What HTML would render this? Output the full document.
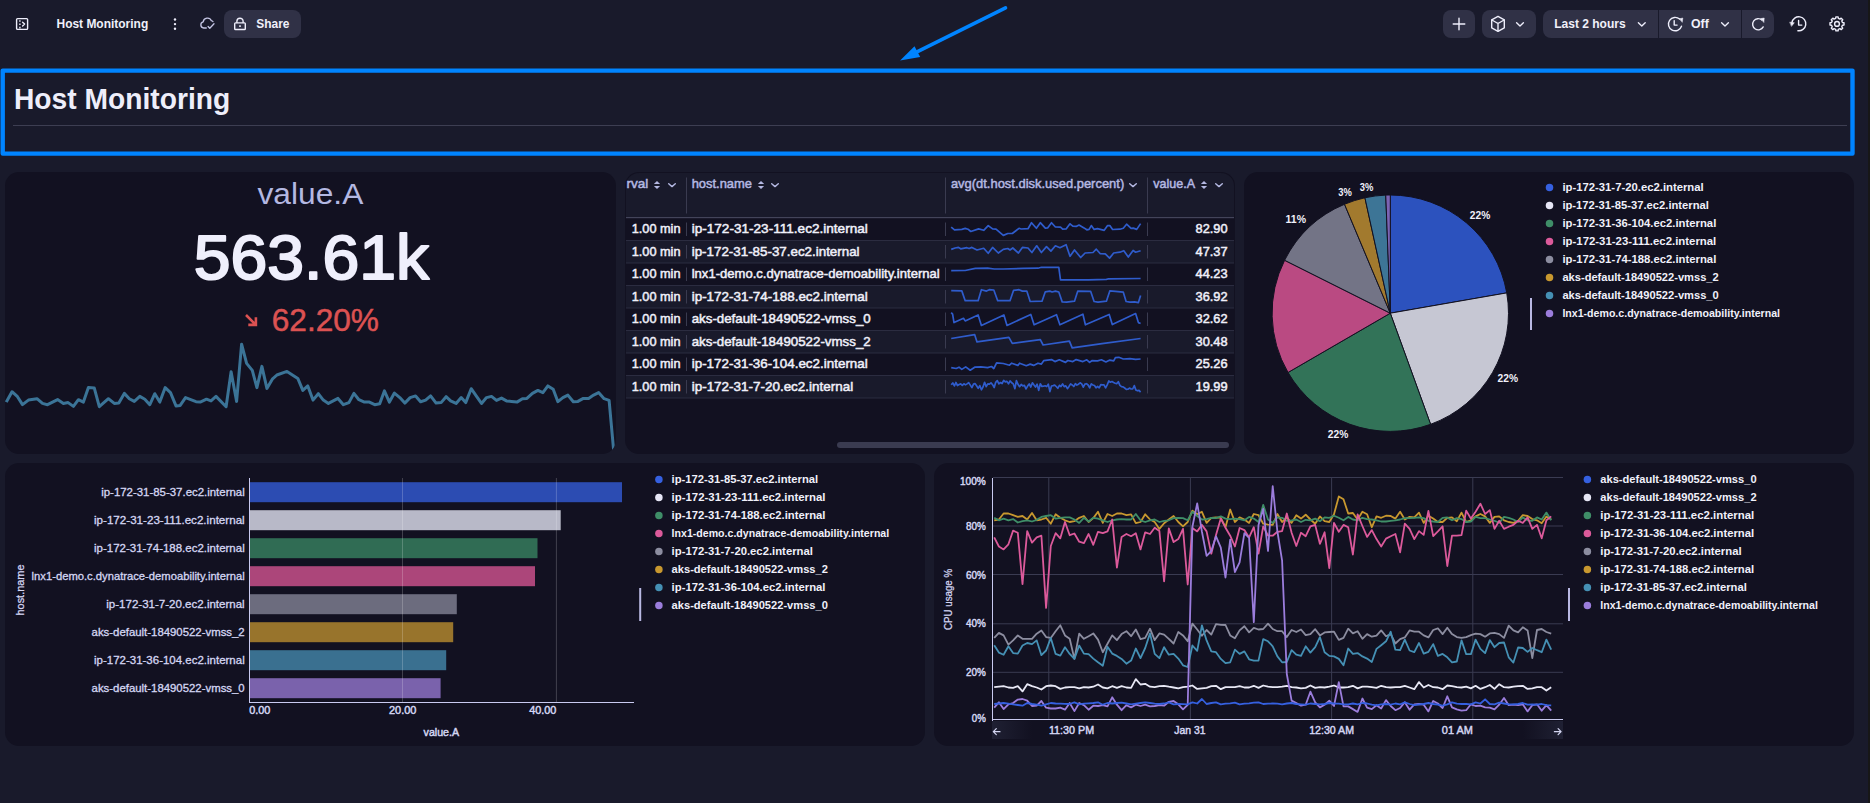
<!DOCTYPE html>
<html lang="en"><head><meta charset="utf-8"><title>Host Monitoring</title><style>
*{box-sizing:border-box}
html,body{margin:0;padding:0}
body{width:1870px;height:803px;overflow:hidden;position:relative;background:#191a2b;font-family:"Liberation Sans",sans-serif;color:#f0f0fa}
.topbar{position:absolute;left:0;top:0;width:1870px;height:48px}
.btn{position:absolute;top:10px;height:28px;background:#303146;border-radius:8px}
.ov{position:absolute;left:0;top:0;display:block}
.panel{position:absolute;background:#121121;border-radius:14px;overflow:hidden}
.panel svg{display:block}
.thead{position:absolute;left:1px;top:1px;width:608px;height:45px;background:#191a2b;border-radius:13px 13px 0 0}
.tr{position:absolute;left:1px;width:608px}
.r0{background:#121121}.r1{background:#191a2b}
.hscroll{position:absolute;left:212px;top:270px;width:392px;height:6px;border-radius:3px;background:#3a3b50}
.edge{position:absolute;right:0;top:0;width:2px;height:803px;background:#171717}
</style></head>
<body>
<div class="topbar">
<div class="btn" style="left:224px;width:77px"></div>
<div class="btn" style="left:1443px;width:32px"></div>
<div class="btn" style="left:1482px;width:54px"></div>
<div class="btn" style="left:1543px;width:115px;border-radius:8px 0 0 8px"></div>
<div class="btn" style="left:1659px;width:82px;border-radius:0"></div>
<div class="btn" style="left:1742px;width:32px;border-radius:0 8px 8px 0"></div>
</div>
<svg class="ov" width="1870" height="64" viewBox="0 0 1870 64" font-family='"Liberation Sans", sans-serif'>
<g fill="none" stroke="#eeeefb" stroke-width="1.4" stroke-linecap="round" stroke-linejoin="round"><rect x="16.6" y="18.6" width="11" height="10.8" rx="1"/><path d="M22.6 22.2l2 1.9-2 1.9"/><path d="M19.9 19v10" stroke-dasharray="1.6 1.7" stroke-dashoffset="-1.2" stroke-linecap="butt"/></g>
<text x="56.5" y="27.7" font-size="13" fill="#f0f0fa" font-weight="bold" textLength="91.7" lengthAdjust="spacingAndGlyphs">Host Monitoring</text>
<circle cx="175" cy="19.5" r="1.2" fill="#eeeefb"/>
<circle cx="175" cy="24.1" r="1.2" fill="#eeeefb"/>
<circle cx="175" cy="28.7" r="1.2" fill="#eeeefb"/>
<g fill="none" stroke="#c4c5e4" stroke-width="1.3" stroke-linecap="round" stroke-linejoin="round"><path d="M206.3 28h-2.6a3.1 3.1 0 0 1-.5-6.1 4.3 4.3 0 0 1 8.2-1.2 2.9 2.9 0 0 1 1.6.9"/><path d="M208.1 26.5l1.7 1.8 4.2-4.6"/></g>
<g fill="none" stroke="#eeeefb" stroke-width="1.4" stroke-linecap="round" stroke-linejoin="round"><rect x="234.7" y="22.9" width="10.6" height="6.6" rx="0.8"/><path d="M236.9 22.6v-1.3a3.1 3.1 0 0 1 6.2 0v1.3"/><path d="M240 25.3v1.8" stroke-width="1.6" stroke-linecap="butt"/></g>
<text x="256.3" y="27.8" font-size="13" fill="#f0f0fa" font-weight="bold" textLength="33.2" lengthAdjust="spacingAndGlyphs">Share</text>
<path d="M1453.2 24h11.6M1459 18.2v11.6" fill="none" stroke="#eeeefb" stroke-width="1.4" stroke-linecap="round" stroke-linejoin="round" stroke-width="1.6" stroke-linecap="butt"/>
<g fill="none" stroke="#eeeefb" stroke-width="1.4" stroke-linecap="round" stroke-linejoin="round"><path d="M1498 16.4l6.3 3.5v7.9l-6.3 3.5-6.3-3.5v-7.9z"/><path d="M1491.9 20l6.1 3.5 6.1-3.5M1498 23.5v7.6"/></g>
<path d="M1516.6 22.7l3.4 3.2 3.4-3.2" fill="none" stroke="#eeeefb" stroke-width="1.4" stroke-linecap="round" stroke-linejoin="round" stroke-width="1.5"/>
<text x="1554.2" y="28.1" font-size="13.2" fill="#f0f0fa" font-weight="bold" textLength="71.5" lengthAdjust="spacingAndGlyphs">Last 2 hours</text>
<path d="M1638.3999999999999 22.7l3.4 3.2 3.4-3.2" fill="none" stroke="#eeeefb" stroke-width="1.4" stroke-linecap="round" stroke-linejoin="round" stroke-width="1.5"/>
<g fill="none" stroke="#eeeefb" stroke-width="1.4" stroke-linecap="round" stroke-linejoin="round"><path d="M1679.6 19.1A6.7 6.7 0 1 0 1681.5 26.2"/><path d="M1679.5 18.8l3.3-.8-.5 4z" fill="#eeeefb" stroke-width="0.5"/><path d="M1674.2 20.6v4.5h2.9"/></g>
<text x="1691.0" y="28.1" font-size="13.2" fill="#f0f0fa" font-weight="bold" textLength="17.8" lengthAdjust="spacingAndGlyphs">Off</text>
<path d="M1721.6 22.7l3.4 3.2 3.4-3.2" fill="none" stroke="#eeeefb" stroke-width="1.4" stroke-linecap="round" stroke-linejoin="round" stroke-width="1.5"/>
<g fill="none" stroke="#eeeefb" stroke-width="1.4" stroke-linecap="round" stroke-linejoin="round"><path d="M1761.9 20A5.6 5.6 0 1 0 1763.2 26.9"/><path d="M1760.7 18.6l3.5-.6-.3 4.2z" fill="#eeeefb" stroke-width="0.5"/></g>
<g fill="none" stroke="#eeeefb" stroke-width="1.4" stroke-linecap="round" stroke-linejoin="round"><path d="M1791.9 22.6A7 7 0 1 1 1797.9 30.75"/><path d="M1790 22.2l4.3.5-2.6 3.4z" fill="#eeeefb" stroke-width="0.5"/><path d="M1798.6 20.5v4.6h3.2"/></g>
<g fill="none" stroke="#eeeefb" stroke-width="1.4" stroke-linecap="round" stroke-linejoin="round" stroke-width="1.3"><path d="M1844.01 22.79 L1844.01 25.01 L1842.45 25.21 L1841.77 26.83 L1842.74 28.07 L1841.17 29.64 L1839.93 28.67 L1838.31 29.35 L1838.11 30.91 L1835.89 30.91 L1835.69 29.35 L1834.07 28.67 L1832.83 29.64 L1831.26 28.07 L1832.23 26.83 L1831.55 25.21 L1829.99 25.01 L1829.99 22.79 L1831.55 22.59 L1832.23 20.97 L1831.26 19.73 L1832.83 18.16 L1834.07 19.13 L1835.69 18.45 L1835.89 16.89 L1838.11 16.89 L1838.31 18.45 L1839.93 19.13 L1841.17 18.16 L1842.74 19.73 L1841.77 20.97 L1842.45 22.59Z"/><circle cx="1837" cy="23.9" r="2.4"/></g>
<g><path d="M1005.5 7.8L916 52.4" stroke="#0084ff" stroke-width="3.6" stroke-linecap="round" fill="none"/><path d="M900.1 60.6L914.5 46.3 920.2 57.1z" fill="#0084ff"/></g>
</svg>
<svg class="ov" style="top:60px" width="1870" height="104" viewBox="0 60 1870 104" font-family='"Liberation Sans", sans-serif'><text x="14.0" y="108.9" font-size="28.6" fill="#eeeefa" font-weight="bold" textLength="216.2" lengthAdjust="spacingAndGlyphs">Host Monitoring</text><rect x="13" y="125" width="1834" height="1" fill="#3d3e52"/><rect x="2.7" y="70.6" width="1849.8" height="83" fill="none" stroke="#0084ff" stroke-width="4.4" stroke-linejoin="round"/></svg>
<div class="panel" style="left:5px;top:172px;width:611px;height:282px"><svg width="611" height="282" viewBox="5 172 611 282" font-family='"Liberation Sans", sans-serif'><text x="257.5" y="203.9" font-size="29.6" fill="#b4b8e2" textLength="105.8" lengthAdjust="spacingAndGlyphs">value.A</text><text x="193.8" y="278.8" font-size="62.8" fill="#efeffc" textLength="235.2" lengthAdjust="spacingAndGlyphs" stroke="#efeffc" stroke-width="2" stroke-linejoin="round">563.61k</text><path d="M246 315l9.6 9.6M248.3 324.9h7.6v-7.6" fill="none" stroke="#dc5252" stroke-width="2.6"/><text x="271.7" y="330.6" font-size="32" fill="#dc5252" textLength="107.3" lengthAdjust="spacingAndGlyphs" stroke="#dc5252" stroke-width="0.5">62.20%</text><polyline points="6.3,402.1 12.0,391.7 17.5,396.7 22.5,404.6 28.4,400.1 37.0,398.7 42.5,403.4 47.5,404.7 57.6,399.6 63.4,403.4 68.1,402.6 73.4,406.4 78.4,399.7 83.4,402.1 88.4,387.6 94.3,388.1 99.3,406.7 108.4,398.7 114.3,403.4 118.8,403.1 124.3,393.4 129.3,398.7 134.3,401.4 139.8,396.4 144.8,399.2 149.8,404.7 154.8,393.7 159.8,402.1 165.2,387.6 170.5,392.6 176.0,405.9 180.2,405.4 185.5,397.6 196.0,401.7 200.2,402.1 206.5,399.2 211.0,400.9 216.0,396.4 226.1,406.7 231.1,371.7 236.6,401.4 241.6,344.2 246.6,363.4 252.3,370.4 256.9,387.6 261.9,366.4 266.9,388.4 272.3,379.2 276.9,375.0 287.0,371.4 297.8,378.4 302.8,390.4 307.8,385.9 313.0,400.1 318.3,393.7 323.3,400.1 328.4,403.4 338.0,398.4 343.4,404.7 348.9,402.6 353.9,393.4 358.9,399.7 364.4,402.1 369.4,402.1 374.7,404.7 379.7,403.7 384.4,390.9 389.4,402.1 394.4,393.1 399.8,397.6 404.8,403.1 410.1,397.6 415.6,395.9 420.6,401.7 425.6,400.1 430.6,395.9 436.1,403.1 441.1,402.6 446.1,396.7 450.6,400.9 456.1,403.4 461.2,397.6 465.7,402.6 471.2,388.7 476.2,395.9 481.5,403.4 486.5,397.6 491.5,396.4 496.5,400.4 501.5,398.1 506.5,400.9 511.5,401.4 516.9,402.1 522.4,398.7 526.9,398.4 532.4,393.4 537.9,390.4 542.9,392.6 547.9,385.9 553.2,389.2 557.9,401.7 562.9,397.6 567.9,395.1 573.3,401.7 577.9,401.4 583.3,398.4 588.6,398.4 593.6,395.1 598.6,392.6 604.1,398.7 609.1,400.4 614.0,454.3" fill="none" stroke="#3b7497" stroke-width="3" stroke-linejoin="round" stroke-linecap="butt"/></svg></div>
<div class="panel" style="left:625px;top:172px;width:610px;height:282px"><div class="thead"></div><div class="tr r0" style="top:46px;height:22px"></div><div class="tr r1" style="top:68px;height:23px"></div><div class="tr r0" style="top:91px;height:23px"></div><div class="tr r1" style="top:114px;height:22px"></div><div class="tr r0" style="top:136px;height:22px"></div><div class="tr r1" style="top:158px;height:23px"></div><div class="tr r0" style="top:181px;height:23px"></div><div class="tr r1" style="top:204px;height:22px"></div><div class="hscroll"></div><svg width="610" height="282" viewBox="625 172 610 282" font-family='"Liberation Sans", sans-serif' style="position:absolute;left:0;top:0"><text x="626.5" y="188.3" font-size="13.6" fill="#b4b8e2" textLength="21.8" lengthAdjust="spacingAndGlyphs" stroke="#b4b8e2" stroke-width="0.5">rval</text><path d="M653.9 183.9l3.1-3 3.1 3z M653.9 185.9l3.1 3 3.1-3z" fill="#b4b8e2"/><path d="M668.7 183.7l3.3 2.9 3.3-2.9" fill="none" stroke="#b4b8e2" stroke-width="1.4" stroke-linecap="round" stroke-linejoin="round"/><text x="691.7" y="188.3" font-size="13.6" fill="#b4b8e2" textLength="60.3" lengthAdjust="spacingAndGlyphs" stroke="#b4b8e2" stroke-width="0.5">host.name</text><path d="M757.9 183.9l3.1-3 3.1 3z M757.9 185.9l3.1 3 3.1-3z" fill="#b4b8e2"/><path d="M771.7 183.7l3.3 2.9 3.3-2.9" fill="none" stroke="#b4b8e2" stroke-width="1.4" stroke-linecap="round" stroke-linejoin="round"/><text x="950.9" y="188.3" font-size="13.6" fill="#b4b8e2" textLength="173.3" lengthAdjust="spacingAndGlyphs" stroke="#b4b8e2" stroke-width="0.5">avg(dt.host.disk.used.percent)</text><path d="M1129.7 183.7l3.3 2.9 3.3-2.9" fill="none" stroke="#b4b8e2" stroke-width="1.4" stroke-linecap="round" stroke-linejoin="round"/><text x="1153.2" y="188.3" font-size="13.6" fill="#b4b8e2" textLength="41.8" lengthAdjust="spacingAndGlyphs" stroke="#b4b8e2" stroke-width="0.5">value.A</text><path d="M1200.9 183.9l3.1-3 3.1 3z M1200.9 185.9l3.1 3 3.1-3z" fill="#b4b8e2"/><path d="M1215.7 183.7l3.3 2.9 3.3-2.9" fill="none" stroke="#b4b8e2" stroke-width="1.4" stroke-linecap="round" stroke-linejoin="round"/><rect x="686.0" y="177.5" width="1" height="36" fill="#3a3b50"/><rect x="945.0" y="177.5" width="1" height="36" fill="#3a3b50"/><rect x="1147.0" y="177.5" width="1" height="36" fill="#3a3b50"/><rect x="626" y="217" width="608" height="1.2" fill="#43445a"/><rect x="626" y="240.0" width="608" height="1" fill="#2b2c40"/><rect x="686.0" y="222.5" width="1" height="13.5" fill="#3a3b50"/><rect x="945.0" y="222.5" width="1" height="13.5" fill="#3a3b50"/><rect x="1147.0" y="222.5" width="1" height="13.5" fill="#3a3b50"/><text x="631.7" y="233.1" font-size="13.4" fill="#f0f0fa" textLength="48.8" lengthAdjust="spacingAndGlyphs" stroke="#f0f0fa" stroke-width="0.5">1.00 min</text><text x="691.7" y="233.1" font-size="13.4" fill="#f0f0fa" textLength="176.1" lengthAdjust="spacingAndGlyphs" stroke="#f0f0fa" stroke-width="0.5">ip-172-31-23-111.ec2.internal</text><text x="1227.6" y="233.1" font-size="13.4" fill="#f0f0fa" text-anchor="end" textLength="32.0" lengthAdjust="spacingAndGlyphs" stroke="#f0f0fa" stroke-width="0.5">82.90</text><polyline points="951.2,227.2 954.5,229.8 961.8,229.4 965.2,228.4 968.0,229.2 970.8,231.5 978.6,228.9 983.7,230.3 988.2,225.6 992.6,228.9 996.0,229.2 1003.3,235.4 1007.8,233.5 1012.3,233.5 1019.0,228.3 1021.2,229.0 1028.0,228.7 1031.5,222.7 1036.4,228.3 1040.3,222.7 1045.3,228.1 1047.6,227.9 1051.5,222.7 1055.4,227.0 1060.5,227.2 1062.7,229.2 1066.1,229.0 1070.0,223.8 1072.8,226.1 1076.2,226.4 1079.0,225.0 1084.0,227.9 1086.8,229.8 1089.1,229.4 1091.3,225.6 1094.1,229.4 1097.5,228.7 1104.2,230.3 1107.6,225.6 1109.8,225.6 1112.6,229.5 1119.9,229.2 1123.3,228.3 1126.6,224.2 1131.1,228.3 1133.3,228.1 1136.7,229.4 1140.6,223.6" fill="none" stroke="#2f5ccc" stroke-width="1.7" stroke-linejoin="round"/><rect x="626" y="262.5" width="608" height="1" fill="#2b2c40"/><rect x="686.0" y="245.0" width="1" height="13.5" fill="#3a3b50"/><rect x="945.0" y="245.0" width="1" height="13.5" fill="#3a3b50"/><rect x="1147.0" y="245.0" width="1" height="13.5" fill="#3a3b50"/><text x="631.7" y="255.6" font-size="13.4" fill="#f0f0fa" textLength="48.8" lengthAdjust="spacingAndGlyphs" stroke="#f0f0fa" stroke-width="0.5">1.00 min</text><text x="691.7" y="255.6" font-size="13.4" fill="#f0f0fa" textLength="167.9" lengthAdjust="spacingAndGlyphs" stroke="#f0f0fa" stroke-width="0.5">ip-172-31-85-37.ec2.internal</text><text x="1227.6" y="255.6" font-size="13.4" fill="#f0f0fa" text-anchor="end" textLength="32.0" lengthAdjust="spacingAndGlyphs" stroke="#f0f0fa" stroke-width="0.5">47.37</text><polyline points="951.2,249.4 955.1,248.0 958.5,247.4 960.7,248.8 966.9,247.7 969.1,248.5 971.9,247.4 977.0,250.0 983.7,248.3 988.2,253.3 992.6,247.4 998.3,253.0 1003.3,249.4 1007.8,248.5 1010.0,250.0 1012.8,248.0 1018.4,253.0 1022.4,247.4 1028.0,248.0 1031.9,252.5 1036.7,245.8 1041.4,252.5 1046.5,246.6 1050.9,251.1 1055.4,245.8 1059.9,247.7 1066.1,244.7 1070.0,256.3 1074.5,250.0 1080.7,257.5 1085.1,253.0 1093.0,252.5 1096.3,249.2 1100.3,253.7 1105.3,253.9 1109.6,258.1 1113.7,253.0 1119.9,252.2 1123.8,250.7 1128.3,257.0 1133.1,250.5 1135.6,252.2 1140.6,250.7" fill="none" stroke="#2f5ccc" stroke-width="1.7" stroke-linejoin="round"/><rect x="626" y="285.0" width="608" height="1" fill="#2b2c40"/><rect x="686.0" y="267.5" width="1" height="13.5" fill="#3a3b50"/><rect x="945.0" y="267.5" width="1" height="13.5" fill="#3a3b50"/><rect x="1147.0" y="267.5" width="1" height="13.5" fill="#3a3b50"/><text x="631.7" y="278.1" font-size="13.4" fill="#f0f0fa" textLength="48.8" lengthAdjust="spacingAndGlyphs" stroke="#f0f0fa" stroke-width="0.5">1.00 min</text><text x="691.7" y="278.1" font-size="13.4" fill="#f0f0fa" textLength="248.0" lengthAdjust="spacingAndGlyphs" stroke="#f0f0fa" stroke-width="0.5">lnx1-demo.c.dynatrace-demoability.internal</text><text x="1227.6" y="278.1" font-size="13.4" fill="#f0f0fa" text-anchor="end" textLength="32.0" lengthAdjust="spacingAndGlyphs" stroke="#f0f0fa" stroke-width="0.5">44.23</text><polyline points="951.2,270.7 965.2,270.5 975.3,268.4 987.6,268.2 994.3,269.0 1003.3,269.0 1023.5,268.4 1038.0,268.2 1041.4,267.3 1058.8,267.3 1060.5,279.9 1088.5,279.9 1106.4,279.4 1108.7,278.8 1140.6,278.5" fill="none" stroke="#2f5ccc" stroke-width="1.7" stroke-linejoin="round"/><rect x="626" y="307.5" width="608" height="1" fill="#2b2c40"/><rect x="686.0" y="290.0" width="1" height="13.5" fill="#3a3b50"/><rect x="945.0" y="290.0" width="1" height="13.5" fill="#3a3b50"/><rect x="1147.0" y="290.0" width="1" height="13.5" fill="#3a3b50"/><text x="631.7" y="300.6" font-size="13.4" fill="#f0f0fa" textLength="48.8" lengthAdjust="spacingAndGlyphs" stroke="#f0f0fa" stroke-width="0.5">1.00 min</text><text x="691.7" y="300.6" font-size="13.4" fill="#f0f0fa" textLength="176.1" lengthAdjust="spacingAndGlyphs" stroke="#f0f0fa" stroke-width="0.5">ip-172-31-74-188.ec2.internal</text><text x="1227.6" y="300.6" font-size="13.4" fill="#f0f0fa" text-anchor="end" textLength="32.0" lengthAdjust="spacingAndGlyphs" stroke="#f0f0fa" stroke-width="0.5">36.92</text><polyline points="951.2,290.6 961.8,290.9 965.2,300.7 978.1,300.7 981.4,289.7 986.5,291.1 989.3,289.7 993.8,290.0 997.7,300.7 1010.0,300.7 1013.6,290.3 1019.0,289.7 1022.4,291.1 1026.8,291.1 1030.2,301.5 1042.0,301.2 1045.3,291.8 1049.8,291.1 1052.1,292.0 1055.4,291.1 1058.8,292.0 1062.2,301.9 1066.6,302.1 1074.5,301.2 1077.8,291.1 1090.7,291.4 1094.1,301.5 1098.0,302.1 1106.4,301.2 1109.8,290.9 1115.4,291.4 1123.3,292.2 1126.1,301.5 1130.0,302.1 1134.5,301.9 1138.4,302.6 1140.6,295.6" fill="none" stroke="#2f5ccc" stroke-width="1.7" stroke-linejoin="round"/><rect x="626" y="330.0" width="608" height="1" fill="#2b2c40"/><rect x="686.0" y="312.5" width="1" height="13.5" fill="#3a3b50"/><rect x="945.0" y="312.5" width="1" height="13.5" fill="#3a3b50"/><rect x="1147.0" y="312.5" width="1" height="13.5" fill="#3a3b50"/><text x="631.7" y="323.1" font-size="13.4" fill="#f0f0fa" textLength="48.8" lengthAdjust="spacingAndGlyphs" stroke="#f0f0fa" stroke-width="0.5">1.00 min</text><text x="691.7" y="323.1" font-size="13.4" fill="#f0f0fa" textLength="179.0" lengthAdjust="spacingAndGlyphs" stroke="#f0f0fa" stroke-width="0.5">aks-default-18490522-vmss_0</text><text x="1227.6" y="323.1" font-size="13.4" fill="#f0f0fa" text-anchor="end" textLength="32.0" lengthAdjust="spacingAndGlyphs" stroke="#f0f0fa" stroke-width="0.5">32.62</text><polyline points="951.2,312.7 952.6,314.2 954.0,322.6 963.5,318.3 965.2,320.9 978.1,315.0 981.4,325.4 1003.9,315.0 1007.0,325.4 1030.8,314.5 1034.1,324.8 1056.5,314.7 1059.9,324.8 1082.9,314.2 1085.4,324.8 1109.2,314.5 1112.3,324.6 1135.6,313.6 1138.4,322.6 1140.6,323.5" fill="none" stroke="#2f5ccc" stroke-width="1.7" stroke-linejoin="round"/><rect x="626" y="352.5" width="608" height="1" fill="#2b2c40"/><rect x="686.0" y="335.0" width="1" height="13.5" fill="#3a3b50"/><rect x="945.0" y="335.0" width="1" height="13.5" fill="#3a3b50"/><rect x="1147.0" y="335.0" width="1" height="13.5" fill="#3a3b50"/><text x="631.7" y="345.6" font-size="13.4" fill="#f0f0fa" textLength="48.8" lengthAdjust="spacingAndGlyphs" stroke="#f0f0fa" stroke-width="0.5">1.00 min</text><text x="691.7" y="345.6" font-size="13.4" fill="#f0f0fa" textLength="179.0" lengthAdjust="spacingAndGlyphs" stroke="#f0f0fa" stroke-width="0.5">aks-default-18490522-vmss_2</text><text x="1227.6" y="345.6" font-size="13.4" fill="#f0f0fa" text-anchor="end" textLength="32.0" lengthAdjust="spacingAndGlyphs" stroke="#f0f0fa" stroke-width="0.5">30.48</text><polyline points="951.2,338.5 974.7,334.7 977.0,341.9 1008.9,337.4 1012.3,343.3 1040.3,339.6 1043.1,345.0 1069.4,341.1 1072.2,347.8 1102.0,343.7 1140.6,338.5" fill="none" stroke="#2f5ccc" stroke-width="1.7" stroke-linejoin="round"/><rect x="626" y="375.0" width="608" height="1" fill="#2b2c40"/><rect x="686.0" y="357.5" width="1" height="13.5" fill="#3a3b50"/><rect x="945.0" y="357.5" width="1" height="13.5" fill="#3a3b50"/><rect x="1147.0" y="357.5" width="1" height="13.5" fill="#3a3b50"/><text x="631.7" y="368.1" font-size="13.4" fill="#f0f0fa" textLength="48.8" lengthAdjust="spacingAndGlyphs" stroke="#f0f0fa" stroke-width="0.5">1.00 min</text><text x="691.7" y="368.1" font-size="13.4" fill="#f0f0fa" textLength="176.1" lengthAdjust="spacingAndGlyphs" stroke="#f0f0fa" stroke-width="0.5">ip-172-31-36-104.ec2.internal</text><text x="1227.6" y="368.1" font-size="13.4" fill="#f0f0fa" text-anchor="end" textLength="32.0" lengthAdjust="spacingAndGlyphs" stroke="#f0f0fa" stroke-width="0.5">25.26</text><polyline points="951.2,367.6 956.2,368.5 959.0,367.2 961.8,369.4 965.7,366.9 970.2,370.2 974.7,367.2 980.9,366.9 987.6,367.6 991.5,366.5 993.8,368.5 996.6,362.9 1003.3,363.5 1009.5,365.2 1011.7,363.2 1017.9,365.4 1019.6,363.2 1026.3,365.7 1030.2,364.1 1033.6,365.4 1038.0,363.2 1041.4,364.1 1043.7,360.7 1051.5,359.6 1054.9,361.6 1059.3,359.8 1065.5,362.4 1067.8,360.5 1072.8,361.6 1076.2,359.6 1082.9,361.6 1086.8,359.8 1089.6,362.4 1091.9,360.7 1097.5,360.9 1101.4,359.8 1105.9,362.0 1109.8,360.1 1113.7,360.9 1115.4,357.6 1118.8,357.3 1123.3,359.0 1130.0,358.7 1135.6,359.3 1140.6,359.0" fill="none" stroke="#2f5ccc" stroke-width="1.7" stroke-linejoin="round"/><rect x="626" y="397.5" width="608" height="1" fill="#2b2c40"/><rect x="686.0" y="380.0" width="1" height="13.5" fill="#3a3b50"/><rect x="945.0" y="380.0" width="1" height="13.5" fill="#3a3b50"/><rect x="1147.0" y="380.0" width="1" height="13.5" fill="#3a3b50"/><text x="631.7" y="390.6" font-size="13.4" fill="#f0f0fa" textLength="48.8" lengthAdjust="spacingAndGlyphs" stroke="#f0f0fa" stroke-width="0.5">1.00 min</text><text x="691.7" y="390.6" font-size="13.4" fill="#f0f0fa" textLength="161.5" lengthAdjust="spacingAndGlyphs" stroke="#f0f0fa" stroke-width="0.5">ip-172-31-7-20.ec2.internal</text><text x="1227.6" y="390.6" font-size="13.4" fill="#f0f0fa" text-anchor="end" textLength="32.0" lengthAdjust="spacingAndGlyphs" stroke="#f0f0fa" stroke-width="0.5">19.99</text><polyline points="951.2,384.8 952.8,383.0 954.4,385.9 955.9,382.5 957.5,385.5 959.1,384.5 960.7,383.9 962.3,385.4 963.9,383.8 965.5,384.9 967.1,383.9 968.7,382.6 970.3,385.1 971.9,387.6 973.5,384.1 975.0,383.5 976.6,385.8 978.2,388.4 979.8,385.6 981.4,389.8 983.0,387.0 984.6,382.3 986.2,386.6 987.8,383.9 989.4,384.2 991.0,382.8 992.6,384.7 994.2,387.5 995.7,382.3 997.3,380.6 998.9,383.8 1000.5,382.5 1002.1,383.5 1003.7,380.4 1005.3,381.9 1006.9,381.4 1008.5,383.9 1010.1,380.9 1011.7,382.7 1013.3,383.9 1014.9,388.7 1016.4,380.6 1018.0,384.3 1019.6,386.7 1021.2,384.5 1022.8,385.9 1024.4,385.4 1026.0,388.9 1027.6,386.1 1029.2,383.9 1030.8,387.0 1032.4,382.8 1034.0,385.1 1035.5,387.1 1037.1,384.2 1038.7,390.4 1040.3,383.8 1041.9,386.5 1043.5,386.2 1045.1,385.8 1046.7,386.6 1048.3,384.1 1049.9,391.6 1051.5,386.0 1053.1,385.6 1054.7,385.1 1056.2,386.5 1057.8,388.3 1059.4,385.3 1061.0,386.5 1062.6,383.9 1064.2,386.7 1065.8,385.8 1067.4,388.7 1069.0,386.4 1070.6,383.9 1072.2,385.0 1073.8,386.5 1075.4,383.7 1076.9,385.1 1078.5,384.2 1080.1,382.8 1081.7,383.9 1083.3,387.2 1084.9,384.1 1086.5,383.7 1088.1,385.0 1089.7,387.9 1091.3,383.9 1092.9,385.0 1094.5,385.5 1096.0,387.9 1097.6,386.4 1099.2,387.8 1100.8,384.6 1102.4,384.8 1104.0,384.9 1105.6,387.9 1107.2,384.9 1108.8,381.0 1110.4,382.2 1112.0,381.5 1113.6,382.4 1115.2,383.2 1116.7,383.6 1118.3,381.7 1119.9,385.4 1121.5,386.7 1123.1,386.9 1124.7,388.0 1126.3,389.3 1127.9,389.2 1129.5,388.1 1131.1,389.0 1132.7,389.0 1134.3,385.6 1135.9,390.1 1137.4,390.8 1139.0,390.4 1140.6,392.1" fill="none" stroke="#2f5ccc" stroke-width="1.7" stroke-linejoin="round"/></svg></div>
<div class="panel" style="left:1244px;top:172px;width:610px;height:282px"><svg width="610" height="282" viewBox="1244 172 610 282" font-family='"Liberation Sans", sans-serif'><path d="M1390.3 313.2L1390.30 195.00A118.2 118.2 0 0 1 1506.74 292.88Z" fill="#2c52be" stroke="#121121" stroke-width="1" stroke-linejoin="round"/><path d="M1390.3 313.2L1506.74 292.88A118.2 118.2 0 0 1 1430.61 424.31Z" fill="#c6c7d3" stroke="#121121" stroke-width="1" stroke-linejoin="round"/><path d="M1390.3 313.2L1430.61 424.31A118.2 118.2 0 0 1 1288.04 372.48Z" fill="#327358" stroke="#121121" stroke-width="1" stroke-linejoin="round"/><path d="M1390.3 313.2L1288.04 372.48A118.2 118.2 0 0 1 1284.61 260.27Z" fill="#ba4a82" stroke="#121121" stroke-width="1" stroke-linejoin="round"/><path d="M1390.3 313.2L1284.61 260.27A118.2 118.2 0 0 1 1344.50 204.24Z" fill="#737486" stroke="#121121" stroke-width="1" stroke-linejoin="round"/><path d="M1390.3 313.2L1344.50 204.24A118.2 118.2 0 0 1 1364.92 197.76Z" fill="#a27a2e" stroke="#121121" stroke-width="1" stroke-linejoin="round"/><path d="M1390.3 313.2L1364.92 197.76A118.2 118.2 0 0 1 1385.76 195.09Z" fill="#3d7596" stroke="#121121" stroke-width="1" stroke-linejoin="round"/><path d="M1390.3 313.2L1385.76 195.09A118.2 118.2 0 0 1 1390.30 195.00Z" fill="#7c64b4" stroke="#121121" stroke-width="1" stroke-linejoin="round"/><text x="1469.8" y="219.4" font-size="10.8" fill="#f0f0fa" font-weight="bold" textLength="20.5" lengthAdjust="spacingAndGlyphs" stroke="#121121" stroke-width="2" paint-order="stroke" stroke-linejoin="round">22%</text><text x="1497.5" y="382.2" font-size="10.8" fill="#f0f0fa" font-weight="bold" textLength="20.5" lengthAdjust="spacingAndGlyphs" stroke="#121121" stroke-width="2" paint-order="stroke" stroke-linejoin="round">22%</text><text x="1327.8" y="438.0" font-size="10.8" fill="#f0f0fa" font-weight="bold" textLength="20.5" lengthAdjust="spacingAndGlyphs" stroke="#121121" stroke-width="2" paint-order="stroke" stroke-linejoin="round">22%</text><text x="1285.5" y="222.8" font-size="10.8" fill="#f0f0fa" font-weight="bold" textLength="20.5" lengthAdjust="spacingAndGlyphs" stroke="#121121" stroke-width="2" paint-order="stroke" stroke-linejoin="round">11%</text><text x="1338.2" y="196.0" font-size="10.8" fill="#f0f0fa" font-weight="bold" textLength="13.6" lengthAdjust="spacingAndGlyphs" stroke="#121121" stroke-width="2" paint-order="stroke" stroke-linejoin="round">3%</text><text x="1359.8" y="190.8" font-size="10.8" fill="#f0f0fa" font-weight="bold" textLength="13.6" lengthAdjust="spacingAndGlyphs" stroke="#121121" stroke-width="2" paint-order="stroke" stroke-linejoin="round">3%</text><circle cx="1549.5" cy="187.4" r="3.75" fill="#3560e0"/><text x="1562.4" y="191.0" font-size="10.8" fill="#f0f0fa" font-weight="bold" textLength="141.3" lengthAdjust="spacingAndGlyphs">ip-172-31-7-20.ec2.internal</text><circle cx="1549.5" cy="205.4" r="3.75" fill="#e6e6f5"/><text x="1562.4" y="209.0" font-size="10.8" fill="#f0f0fa" font-weight="bold" textLength="146.5" lengthAdjust="spacingAndGlyphs">ip-172-31-85-37.ec2.internal</text><circle cx="1549.5" cy="223.4" r="3.75" fill="#3f8e68"/><text x="1562.4" y="227.0" font-size="10.8" fill="#f0f0fa" font-weight="bold" textLength="153.9" lengthAdjust="spacingAndGlyphs">ip-172-31-36-104.ec2.internal</text><circle cx="1549.5" cy="241.4" r="3.75" fill="#dc5a9b"/><text x="1562.4" y="245.0" font-size="10.8" fill="#f0f0fa" font-weight="bold" textLength="153.9" lengthAdjust="spacingAndGlyphs">ip-172-31-23-111.ec2.internal</text><circle cx="1549.5" cy="259.4" r="3.75" fill="#8c8da0"/><text x="1562.4" y="263.0" font-size="10.8" fill="#f0f0fa" font-weight="bold" textLength="153.9" lengthAdjust="spacingAndGlyphs">ip-172-31-74-188.ec2.internal</text><circle cx="1549.5" cy="277.4" r="3.75" fill="#c8982f"/><text x="1562.4" y="281.0" font-size="10.8" fill="#f0f0fa" font-weight="bold" textLength="156.3" lengthAdjust="spacingAndGlyphs">aks-default-18490522-vmss_2</text><circle cx="1549.5" cy="295.4" r="3.75" fill="#4590b4"/><text x="1562.4" y="299.0" font-size="10.8" fill="#f0f0fa" font-weight="bold" textLength="156.3" lengthAdjust="spacingAndGlyphs">aks-default-18490522-vmss_0</text><circle cx="1549.5" cy="313.4" r="3.75" fill="#9b7ddc"/><text x="1562.4" y="317.0" font-size="10.8" fill="#f0f0fa" font-weight="bold" textLength="217.6" lengthAdjust="spacingAndGlyphs">lnx1-demo.c.dynatrace-demoability.internal</text><rect x="1530" y="298" width="2" height="32" fill="#b9b9e3"/></svg></div>
<div class="panel" style="left:5px;top:463px;width:920px;height:283px"><svg width="920" height="283" viewBox="5 463 920 283" font-family='"Liberation Sans", sans-serif'><rect x="250" y="482.2" width="372.0" height="20" fill="#2c4cb2"/><text x="101.2" y="495.9" font-size="10.8" fill="#d4d6f2" textLength="143.5" lengthAdjust="spacingAndGlyphs" stroke="#d4d6f2" stroke-width="0.3">ip-172-31-85-37.ec2.internal</text><rect x="250" y="510.2" width="310.7" height="20" fill="#b8b9c8"/><text x="94.0" y="523.9" font-size="10.8" fill="#d4d6f2" textLength="150.7" lengthAdjust="spacingAndGlyphs" stroke="#d4d6f2" stroke-width="0.3">ip-172-31-23-111.ec2.internal</text><rect x="250" y="538.2" width="287.5" height="20" fill="#306c54"/><text x="94.0" y="551.9" font-size="10.8" fill="#d4d6f2" textLength="150.7" lengthAdjust="spacingAndGlyphs" stroke="#d4d6f2" stroke-width="0.3">ip-172-31-74-188.ec2.internal</text><rect x="250" y="566.2" width="285.0" height="20" fill="#ac467a"/><text x="31.6" y="579.9" font-size="10.8" fill="#d4d6f2" textLength="213.1" lengthAdjust="spacingAndGlyphs" stroke="#d4d6f2" stroke-width="0.3">lnx1-demo.c.dynatrace-demoability.internal</text><rect x="250" y="594.2" width="206.8" height="20" fill="#6c6c7e"/><text x="106.3" y="607.9" font-size="10.8" fill="#d4d6f2" textLength="138.4" lengthAdjust="spacingAndGlyphs" stroke="#d4d6f2" stroke-width="0.3">ip-172-31-7-20.ec2.internal</text><rect x="250" y="622.2" width="203.2" height="20" fill="#98742c"/><text x="91.6" y="635.9" font-size="10.8" fill="#d4d6f2" textLength="153.1" lengthAdjust="spacingAndGlyphs" stroke="#d4d6f2" stroke-width="0.3">aks-default-18490522-vmss_2</text><rect x="250" y="650.2" width="196.2" height="20" fill="#3a7090"/><text x="94.0" y="663.9" font-size="10.8" fill="#d4d6f2" textLength="150.7" lengthAdjust="spacingAndGlyphs" stroke="#d4d6f2" stroke-width="0.3">ip-172-31-36-104.ec2.internal</text><rect x="250" y="678.2" width="190.6" height="20" fill="#7a62ac"/><text x="91.6" y="691.9" font-size="10.8" fill="#d4d6f2" textLength="153.1" lengthAdjust="spacingAndGlyphs" stroke="#d4d6f2" stroke-width="0.3">aks-default-18490522-vmss_0</text><rect x="402.0" y="478" width="1" height="224" fill="#ffffff" fill-opacity="0.2"/><rect x="555.9" y="478" width="1" height="224" fill="#ffffff" fill-opacity="0.2"/><rect x="249" y="478" width="1" height="225" fill="#c9caf0"/><rect x="249" y="702" width="385" height="1" fill="#c9caf0"/><text x="249.2" y="714.1" font-size="10.6" fill="#d4d6f2" textLength="21.2" lengthAdjust="spacingAndGlyphs" stroke="#d4d6f2" stroke-width="0.45">0.00</text><text x="389.0" y="714.1" font-size="10.6" fill="#d4d6f2" textLength="27.4" lengthAdjust="spacingAndGlyphs" stroke="#d4d6f2" stroke-width="0.45">20.00</text><text x="529.2" y="714.1" font-size="10.6" fill="#d4d6f2" textLength="27.2" lengthAdjust="spacingAndGlyphs" stroke="#d4d6f2" stroke-width="0.45">40.00</text><text x="423.6" y="735.9" font-size="10.6" fill="#d4d6f2" textLength="35.5" lengthAdjust="spacingAndGlyphs" stroke="#d4d6f2" stroke-width="0.45">value.A</text><g transform="translate(24.2 590) rotate(-90)"><text x="-25.5" y="0.0" font-size="10.6" fill="#d4d6f2" textLength="51.0" lengthAdjust="spacingAndGlyphs" stroke="#d4d6f2" stroke-width="0.25">host.name</text></g><circle cx="658.9" cy="479.4" r="3.75" fill="#3560e0"/><text x="671.6" y="483.0" font-size="10.8" fill="#f0f0fa" font-weight="bold" textLength="146.5" lengthAdjust="spacingAndGlyphs">ip-172-31-85-37.ec2.internal</text><circle cx="658.9" cy="497.4" r="3.75" fill="#e6e6f5"/><text x="671.6" y="501.0" font-size="10.8" fill="#f0f0fa" font-weight="bold" textLength="153.9" lengthAdjust="spacingAndGlyphs">ip-172-31-23-111.ec2.internal</text><circle cx="658.9" cy="515.4" r="3.75" fill="#3f8e68"/><text x="671.6" y="519.0" font-size="10.8" fill="#f0f0fa" font-weight="bold" textLength="153.9" lengthAdjust="spacingAndGlyphs">ip-172-31-74-188.ec2.internal</text><circle cx="658.9" cy="533.4" r="3.75" fill="#dc5a9b"/><text x="671.6" y="537.0" font-size="10.8" fill="#f0f0fa" font-weight="bold" textLength="217.6" lengthAdjust="spacingAndGlyphs">lnx1-demo.c.dynatrace-demoability.internal</text><circle cx="658.9" cy="551.4" r="3.75" fill="#8c8da0"/><text x="671.6" y="555.0" font-size="10.8" fill="#f0f0fa" font-weight="bold" textLength="141.3" lengthAdjust="spacingAndGlyphs">ip-172-31-7-20.ec2.internal</text><circle cx="658.9" cy="569.4" r="3.75" fill="#c8982f"/><text x="671.6" y="573.0" font-size="10.8" fill="#f0f0fa" font-weight="bold" textLength="156.3" lengthAdjust="spacingAndGlyphs">aks-default-18490522-vmss_2</text><circle cx="658.9" cy="587.4" r="3.75" fill="#4590b4"/><text x="671.6" y="591.0" font-size="10.8" fill="#f0f0fa" font-weight="bold" textLength="153.9" lengthAdjust="spacingAndGlyphs">ip-172-31-36-104.ec2.internal</text><circle cx="658.9" cy="605.4" r="3.75" fill="#9b7ddc"/><text x="671.6" y="609.0" font-size="10.8" fill="#f0f0fa" font-weight="bold" textLength="156.3" lengthAdjust="spacingAndGlyphs">aks-default-18490522-vmss_0</text><rect x="639.2" y="588" width="2" height="33" fill="#b9b9e3"/></svg></div>
<div class="panel" style="left:934px;top:463px;width:920px;height:283px"><svg width="920" height="283" viewBox="934 463 920 283" font-family='"Liberation Sans", sans-serif'><rect x="993" y="477.0" width="570" height="1" fill="#3a3b52"/><rect x="993" y="525.5" width="570" height="1" fill="#3a3b52"/><rect x="993" y="574.0" width="570" height="1" fill="#3a3b52"/><rect x="993" y="623.3" width="570" height="1" fill="#3a3b52"/><rect x="993" y="671.8" width="570" height="1" fill="#3a3b52"/><rect x="1048.3" y="478" width="1" height="242" fill="#3a3b52"/><rect x="1189.9" y="478" width="1" height="242" fill="#3a3b52"/><rect x="1331.1" y="478" width="1" height="242" fill="#3a3b52"/><rect x="1472.3" y="478" width="1" height="242" fill="#3a3b52"/><defs><linearGradient id="gl" x1="0" x2="1"><stop offset="0" stop-color="#1f2033"/><stop offset="1" stop-color="#1f2033" stop-opacity="0"/></linearGradient><linearGradient id="gr" x1="1" x2="0"><stop offset="0" stop-color="#1f2033"/><stop offset="1" stop-color="#1f2033" stop-opacity="0"/></linearGradient></defs><rect x="992" y="721" width="40" height="18" fill="url(#gl)"/><rect x="1523" y="721" width="40" height="18" fill="url(#gr)"/><polyline points="994.2,520.3 998.9,519.5 1003.6,513.5 1008.4,513.5 1013.1,515.2 1017.8,516.9 1022.5,516.0 1027.2,519.5 1032.0,513.0 1036.7,520.3 1041.4,519.5 1046.1,517.8 1050.8,523.7 1055.6,514.3 1060.3,517.8 1065.0,520.3 1069.7,522.0 1074.4,521.2 1079.2,517.8 1083.9,516.0 1088.6,522.0 1093.3,518.1 1098.0,511.8 1102.8,522.9 1107.5,514.0 1112.2,516.0 1116.9,513.5 1121.6,513.5 1126.4,515.2 1131.1,514.3 1135.8,523.2 1140.5,522.0 1145.2,514.3 1150.0,519.5 1154.7,522.0 1159.4,528.9 1164.1,523.2 1168.8,519.5 1173.6,516.0 1178.3,522.0 1183.0,526.3 1187.7,522.0 1192.4,510.6 1197.2,514.3 1201.9,511.8 1206.6,522.9 1211.3,517.8 1216.0,517.4 1220.8,517.8 1225.5,527.2 1230.2,509.5 1234.9,522.0 1239.6,517.4 1244.4,519.5 1249.1,522.9 1253.8,514.0 1258.5,515.2 1263.2,523.7 1268.0,524.6 1272.7,524.9 1277.4,514.0 1282.1,522.0 1286.8,517.4 1291.6,522.9 1296.3,515.2 1301.0,518.6 1305.7,514.7 1310.4,519.5 1315.2,523.7 1319.9,516.4 1324.6,521.2 1329.3,522.0 1334.0,514.3 1338.8,496.4 1343.5,499.3 1348.2,513.5 1352.9,513.0 1357.6,519.5 1362.4,511.8 1367.1,514.3 1371.8,527.2 1376.5,516.4 1381.2,517.8 1386.0,515.7 1390.7,516.0 1395.4,518.6 1400.1,511.8 1404.8,519.5 1409.6,516.9 1414.3,517.4 1419.0,512.6 1423.7,522.9 1428.4,515.7 1433.2,518.6 1437.9,522.0 1442.6,522.0 1447.3,517.8 1452.0,517.4 1456.8,521.2 1461.5,512.6 1466.2,522.0 1470.9,520.3 1475.6,516.4 1480.4,514.0 1485.1,516.4 1489.8,522.9 1494.5,516.9 1499.2,516.4 1504.0,520.3 1508.7,522.0 1513.4,522.9 1518.1,520.8 1522.8,515.2 1527.6,516.0 1532.3,519.1 1537.0,520.3 1541.7,523.2 1546.4,516.4 1551.2,519.5" fill="none" stroke="#c8982f" stroke-width="1.8" stroke-linejoin="round"/><polyline points="994.2,517.8 998.9,520.3 1003.6,518.6 1008.4,520.3 1013.1,519.1 1017.8,522.5 1022.5,521.2 1027.2,520.3 1032.0,521.5 1036.7,519.8 1041.4,516.9 1046.1,516.0 1050.8,515.2 1055.6,518.6 1060.3,517.8 1065.0,517.4 1069.7,517.4 1074.4,519.5 1079.2,522.9 1083.9,517.8 1088.6,521.5 1093.3,517.8 1098.0,518.6 1102.8,520.3 1107.5,522.0 1112.2,520.3 1116.9,519.5 1121.6,519.1 1126.4,519.5 1131.1,519.5 1135.8,514.0 1140.5,520.3 1145.2,522.0 1150.0,520.3 1154.7,519.5 1159.4,522.0 1164.1,520.8 1168.8,520.3 1173.6,518.1 1178.3,517.8 1183.0,518.1 1187.7,520.3 1192.4,511.8 1197.2,516.0 1201.9,519.5 1206.6,519.1 1211.3,517.8 1216.0,518.1 1220.8,516.4 1225.5,518.6 1230.2,519.1 1234.9,518.6 1239.6,519.1 1244.4,520.3 1249.1,516.9 1253.8,518.6 1258.5,522.0 1263.2,504.9 1268.0,519.5 1272.7,522.9 1277.4,517.4 1282.1,517.8 1286.8,520.8 1291.6,520.3 1296.3,519.5 1301.0,522.0 1305.7,519.8 1310.4,520.3 1315.2,518.6 1319.9,521.2 1324.6,517.4 1329.3,517.8 1334.0,515.7 1338.8,517.8 1343.5,520.3 1348.2,516.9 1352.9,519.5 1357.6,520.3 1362.4,517.8 1367.1,519.1 1371.8,519.5 1376.5,520.3 1381.2,521.5 1386.0,521.5 1390.7,520.8 1395.4,520.3 1400.1,519.5 1404.8,518.1 1409.6,518.1 1414.3,517.8 1419.0,517.4 1423.7,518.1 1428.4,520.8 1433.2,521.5 1437.9,522.0 1442.6,517.8 1447.3,517.4 1452.0,520.3 1456.8,518.1 1461.5,519.1 1466.2,522.0 1470.9,521.5 1475.6,516.9 1480.4,518.1 1485.1,518.1 1489.8,519.5 1494.5,520.8 1499.2,522.9 1504.0,516.9 1508.7,517.8 1513.4,519.5 1518.1,522.0 1522.8,517.4 1527.6,520.3 1532.3,520.8 1537.0,517.4 1541.7,519.5 1546.4,512.6 1551.2,520.3" fill="none" stroke="#3f8e68" stroke-width="1.8" stroke-linejoin="round"/><polyline points="994.2,537.4 998.9,546.5 1003.6,549.4 1008.4,544.3 1013.1,530.6 1017.8,532.8 1022.5,584.1 1027.2,531.1 1032.0,542.6 1036.7,537.4 1041.4,535.7 1046.1,607.9 1050.8,546.0 1055.6,533.2 1060.3,538.3 1065.0,522.0 1069.7,535.2 1074.4,533.5 1079.2,541.7 1083.9,543.1 1088.6,534.0 1093.3,544.8 1098.0,531.8 1102.8,533.2 1107.5,531.4 1112.2,519.5 1116.9,567.7 1121.6,536.9 1126.4,534.0 1131.1,536.2 1135.8,533.2 1140.5,549.4 1145.2,532.3 1150.0,534.0 1154.7,527.7 1159.4,531.1 1164.1,581.4 1168.8,528.4 1173.6,542.1 1178.3,539.1 1183.0,528.9 1187.7,584.5 1192.4,528.0 1197.2,531.4 1201.9,524.9 1206.6,531.4 1211.3,553.7 1216.0,534.9 1220.8,518.6 1225.5,527.7 1230.2,535.7 1234.9,546.5 1239.6,528.0 1244.4,530.1 1249.1,537.4 1253.8,527.2 1258.5,553.7 1263.2,526.3 1268.0,535.7 1272.7,535.7 1277.4,531.8 1282.1,531.1 1286.8,513.5 1291.6,532.8 1296.3,546.0 1301.0,532.8 1305.7,536.2 1310.4,526.3 1315.2,524.9 1319.9,543.8 1324.6,532.3 1329.3,568.2 1334.0,522.9 1338.8,531.8 1343.5,524.9 1348.2,527.2 1352.9,554.5 1357.6,514.3 1362.4,526.0 1367.1,536.9 1371.8,530.1 1376.5,539.1 1381.2,546.5 1386.0,538.6 1390.7,536.2 1395.4,534.0 1400.1,552.3 1404.8,523.7 1409.6,528.9 1414.3,539.1 1419.0,531.1 1423.7,534.9 1428.4,510.9 1433.2,536.2 1437.9,531.4 1442.6,526.3 1447.3,566.0 1452.0,535.7 1456.8,535.7 1461.5,535.2 1466.2,510.6 1470.9,518.6 1475.6,511.8 1480.4,503.7 1485.1,514.0 1489.8,510.1 1494.5,528.9 1499.2,520.8 1504.0,528.9 1508.7,526.7 1513.4,524.9 1518.1,520.8 1522.8,522.9 1527.6,517.4 1532.3,528.9 1537.0,524.9 1541.7,538.3 1546.4,520.3 1551.2,516.4" fill="none" stroke="#dc5a9b" stroke-width="1.8" stroke-linejoin="round"/><polyline points="994.2,637.9 998.9,632.9 1003.6,635.4 1008.4,644.6 1013.1,640.4 1017.8,635.4 1022.5,638.8 1027.2,638.8 1032.0,638.8 1036.7,633.7 1041.4,630.4 1046.1,637.1 1050.8,637.9 1055.6,631.2 1060.3,625.3 1065.0,635.4 1069.7,638.8 1074.4,658.9 1079.2,633.7 1083.9,638.8 1088.6,636.2 1093.3,633.4 1098.0,639.6 1102.8,652.2 1107.5,643.8 1112.2,635.4 1116.9,640.1 1121.6,634.1 1126.4,631.2 1131.1,636.2 1135.8,629.5 1140.5,639.1 1145.2,637.9 1150.0,628.7 1154.7,640.1 1159.4,633.4 1164.1,634.6 1168.8,638.8 1173.6,643.5 1178.3,632.0 1183.0,635.4 1187.7,641.3 1192.4,623.6 1197.2,629.5 1201.9,635.7 1206.6,630.0 1211.3,634.6 1216.0,624.1 1220.8,624.8 1225.5,625.0 1230.2,635.4 1234.9,638.3 1239.6,630.4 1244.4,626.2 1249.1,632.4 1253.8,627.8 1258.5,629.5 1263.2,629.0 1268.0,623.6 1272.7,629.0 1277.4,631.2 1282.1,631.2 1286.8,637.1 1291.6,630.0 1296.3,632.0 1301.0,629.5 1305.7,635.1 1310.4,634.1 1315.2,629.2 1319.9,635.4 1324.6,632.4 1329.3,632.0 1334.0,631.7 1338.8,639.9 1343.5,637.9 1348.2,628.7 1352.9,633.4 1357.6,631.2 1362.4,638.8 1367.1,634.1 1371.8,636.7 1376.5,635.7 1381.2,630.4 1386.0,636.2 1390.7,634.1 1395.4,643.5 1400.1,639.1 1404.8,637.4 1409.6,630.4 1414.3,631.7 1419.0,631.7 1423.7,635.4 1428.4,637.4 1433.2,630.0 1437.9,628.3 1442.6,634.1 1447.3,627.8 1452.0,634.1 1456.8,637.1 1461.5,637.9 1466.2,637.1 1470.9,635.1 1475.6,633.7 1480.4,634.1 1485.1,636.7 1489.8,633.4 1494.5,632.9 1499.2,634.1 1504.0,637.9 1508.7,625.6 1513.4,630.4 1518.1,632.4 1522.8,627.3 1527.6,630.4 1532.3,658.1 1537.0,630.0 1541.7,629.0 1546.4,632.0 1551.2,633.7" fill="none" stroke="#8c8da0" stroke-width="1.8" stroke-linejoin="round"/><polyline points="994.2,645.2 998.9,652.6 1003.6,654.7 1008.4,646.3 1013.1,653.1 1017.8,653.6 1022.5,645.5 1027.2,643.0 1032.0,644.1 1036.7,640.4 1041.4,655.2 1046.1,650.5 1050.8,637.9 1055.6,653.9 1060.3,655.6 1065.0,647.2 1069.7,653.9 1074.4,658.9 1079.2,645.5 1083.9,653.6 1088.6,654.2 1093.3,658.6 1098.0,662.3 1102.8,665.7 1107.5,646.8 1112.2,653.6 1116.9,655.9 1121.6,658.9 1126.4,663.7 1131.1,660.6 1135.8,648.5 1140.5,658.1 1145.2,648.0 1150.0,633.4 1154.7,653.9 1159.4,658.1 1164.1,647.2 1168.8,654.7 1173.6,653.9 1178.3,658.6 1183.0,665.3 1187.7,667.0 1192.4,645.5 1197.2,650.9 1201.9,625.3 1206.6,640.4 1211.3,651.4 1216.0,652.2 1220.8,658.9 1225.5,663.1 1230.2,662.3 1234.9,649.7 1239.6,653.9 1244.4,651.4 1249.1,659.3 1253.8,660.6 1258.5,660.6 1263.2,639.1 1268.0,641.3 1272.7,646.3 1277.4,656.4 1282.1,662.3 1286.8,662.0 1291.6,650.2 1296.3,654.7 1301.0,655.9 1305.7,646.3 1310.4,652.6 1315.2,647.2 1319.9,637.1 1324.6,652.2 1329.3,655.9 1334.0,656.4 1338.8,658.9 1343.5,665.3 1348.2,648.5 1352.9,653.9 1357.6,653.1 1362.4,656.4 1367.1,658.6 1371.8,662.0 1376.5,648.9 1381.2,645.2 1386.0,641.3 1390.7,631.7 1395.4,649.7 1400.1,650.2 1404.8,639.6 1409.6,650.5 1414.3,652.2 1419.0,643.0 1423.7,653.6 1428.4,651.9 1433.2,644.1 1437.9,655.9 1442.6,653.9 1447.3,657.3 1452.0,662.3 1456.8,661.5 1461.5,640.4 1466.2,654.2 1470.9,654.2 1475.6,639.6 1480.4,648.9 1485.1,653.1 1489.8,640.1 1494.5,647.2 1499.2,643.0 1504.0,642.5 1508.7,657.3 1513.4,662.6 1518.1,647.5 1522.8,648.0 1527.6,651.9 1532.3,648.0 1537.0,650.2 1541.7,652.2 1546.4,639.6 1551.2,649.7" fill="none" stroke="#4590b4" stroke-width="1.8" stroke-linejoin="round"/><polyline points="994.2,687.2 998.9,686.7 1003.6,686.2 1008.4,687.5 1013.1,687.9 1017.8,686.2 1022.5,691.4 1027.2,684.2 1032.0,686.2 1036.7,687.5 1041.4,689.5 1046.1,686.2 1050.8,685.5 1055.6,686.2 1060.3,688.9 1065.0,687.5 1069.7,687.2 1074.4,687.2 1079.2,688.4 1083.9,687.2 1088.6,687.5 1093.3,686.7 1098.0,684.5 1102.8,687.5 1107.5,688.4 1112.2,686.2 1116.9,687.9 1121.6,686.2 1126.4,687.5 1131.1,687.9 1135.8,679.1 1140.5,684.5 1145.2,683.8 1150.0,686.7 1154.7,687.2 1159.4,686.2 1164.1,685.8 1168.8,686.7 1173.6,687.5 1178.3,688.4 1183.0,687.2 1187.7,686.7 1192.4,685.5 1197.2,688.9 1201.9,688.4 1206.6,687.9 1211.3,686.2 1216.0,685.8 1220.8,689.2 1225.5,687.2 1230.2,687.2 1234.9,687.2 1239.6,686.2 1244.4,687.5 1249.1,687.5 1253.8,685.8 1258.5,687.9 1263.2,685.5 1268.0,686.7 1272.7,687.2 1277.4,687.2 1282.1,686.7 1286.8,685.8 1291.6,687.2 1296.3,687.5 1301.0,688.4 1305.7,687.9 1310.4,685.5 1315.2,687.9 1319.9,687.2 1324.6,687.5 1329.3,686.7 1334.0,685.5 1338.8,687.5 1343.5,687.5 1348.2,687.2 1352.9,685.8 1357.6,688.4 1362.4,686.7 1367.1,686.7 1371.8,687.2 1376.5,687.9 1381.2,685.8 1386.0,687.2 1390.7,687.5 1395.4,687.2 1400.1,687.2 1404.8,685.8 1409.6,687.5 1414.3,689.2 1419.0,682.1 1423.7,687.5 1428.4,685.0 1433.2,687.2 1437.9,687.5 1442.6,689.2 1447.3,685.5 1452.0,686.2 1456.8,687.2 1461.5,687.5 1466.2,686.7 1470.9,688.4 1475.6,685.8 1480.4,688.9 1485.1,687.2 1489.8,685.0 1494.5,688.9 1499.2,684.2 1504.0,687.2 1508.7,687.5 1513.4,686.7 1518.1,686.2 1522.8,685.8 1527.6,688.9 1532.3,688.4 1537.0,687.2 1541.7,687.2 1546.4,690.6 1551.2,687.2" fill="none" stroke="#e8e8f5" stroke-width="1.8" stroke-linejoin="round"/><polyline points="994.2,707.7 998.9,702.3 1003.6,709.1 1008.4,704.3 1013.1,703.0 1017.8,699.6 1022.5,699.0 1027.2,700.6 1032.0,706.0 1036.7,705.7 1041.4,701.0 1046.1,707.7 1050.8,708.5 1055.6,708.5 1060.3,707.7 1065.0,709.7 1069.7,703.0 1074.4,711.1 1079.2,703.0 1083.9,705.2 1088.6,709.7 1093.3,705.7 1098.0,706.0 1102.8,705.2 1107.5,706.4 1112.2,697.3 1116.9,704.7 1121.6,710.2 1126.4,705.2 1131.1,707.4 1135.8,704.7 1140.5,706.0 1145.2,704.7 1150.0,706.4 1154.7,706.0 1159.4,705.2 1164.1,705.7 1168.8,701.8 1173.6,701.0 1178.3,704.3 1183.0,709.4 1187.7,704.8 1192.4,526.7 1197.2,503.4 1201.9,531.5 1206.6,555.8 1211.3,551.0 1216.0,536.4 1220.8,547.7 1225.5,577.5 1230.2,539.6 1234.9,572.0 1239.6,562.3 1244.4,533.1 1249.1,538.0 1253.8,622.2 1258.5,525.0 1263.2,508.9 1268.0,551.0 1272.7,486.2 1277.4,531.5 1282.1,560.7 1286.8,674.0 1291.6,700.6 1296.3,703.0 1301.0,705.7 1305.7,704.7 1310.4,691.7 1315.2,702.3 1319.9,707.4 1324.6,704.7 1329.3,700.6 1334.0,706.0 1338.8,682.1 1343.5,706.4 1348.2,706.4 1352.9,709.1 1357.6,711.9 1362.4,698.5 1367.1,707.7 1371.8,709.1 1376.5,705.2 1381.2,708.5 1386.0,700.1 1390.7,706.0 1395.4,710.2 1400.1,708.0 1404.8,702.3 1409.6,709.7 1414.3,704.3 1419.0,704.0 1423.7,704.7 1428.4,711.4 1433.2,701.0 1437.9,703.5 1442.6,708.0 1447.3,696.3 1452.0,707.4 1456.8,709.4 1461.5,710.7 1466.2,710.2 1470.9,704.3 1475.6,706.0 1480.4,705.7 1485.1,707.4 1489.8,707.7 1494.5,709.4 1499.2,704.7 1504.0,698.0 1508.7,705.2 1513.4,704.7 1518.1,705.2 1522.8,704.3 1527.6,711.4 1532.3,705.2 1537.0,704.3 1541.7,710.7 1546.4,705.2 1551.2,710.7" fill="none" stroke="#9b7ddc" stroke-width="1.8" stroke-linejoin="round"/><polyline points="994.2,704.0 998.9,703.5 1003.6,703.0 1008.4,703.7 1013.1,704.3 1017.8,705.0 1022.5,705.7 1027.2,703.0 1032.0,704.0 1036.7,704.7 1041.4,705.7 1046.1,704.3 1050.8,703.0 1055.6,703.5 1060.3,703.7 1065.0,703.8 1069.7,704.0 1074.4,702.3 1079.2,704.3 1083.9,703.7 1088.6,703.3 1093.3,703.0 1098.0,702.3 1102.8,704.7 1107.5,703.0 1112.2,703.5 1116.9,703.0 1121.6,702.7 1126.4,703.5 1131.1,704.3 1135.8,703.7 1140.5,703.0 1145.2,702.3 1150.0,703.0 1154.7,703.7 1159.4,704.0 1164.1,703.5 1168.8,702.3 1173.6,704.3 1178.3,704.0 1183.0,704.2 1187.7,704.3 1192.4,702.3 1197.2,703.5 1201.9,699.0 1206.6,704.0 1211.3,703.0 1216.0,702.3 1220.8,704.3 1225.5,703.7 1230.2,703.3 1234.9,702.7 1239.6,704.3 1244.4,703.7 1249.1,703.3 1253.8,702.7 1258.5,702.3 1263.2,704.0 1268.0,703.7 1272.7,703.5 1277.4,703.7 1282.1,704.3 1286.8,703.5 1291.6,703.0 1296.3,704.0 1301.0,704.3 1305.7,704.7 1310.4,703.5 1315.2,704.0 1319.9,704.3 1324.6,704.0 1329.3,703.0 1334.0,703.5 1338.8,703.7 1343.5,704.3 1348.2,704.3 1352.9,703.5 1357.6,704.3 1362.4,703.0 1367.1,703.5 1371.8,704.7 1376.5,705.4 1381.2,704.3 1386.0,704.0 1390.7,704.7 1395.4,703.5 1400.1,704.3 1404.8,702.3 1409.6,704.0 1414.3,705.2 1419.0,704.3 1423.7,704.0 1428.4,703.0 1433.2,704.0 1437.9,704.7 1442.6,705.7 1447.3,704.3 1452.0,702.3 1456.8,703.7 1461.5,704.0 1466.2,704.0 1470.9,704.3 1475.6,702.3 1480.4,703.5 1485.1,699.3 1489.8,704.0 1494.5,704.3 1499.2,702.7 1504.0,703.5 1508.7,704.3 1513.4,704.3 1518.1,704.0 1522.8,703.0 1527.6,704.7 1532.3,704.3 1537.0,704.7 1541.7,704.0 1546.4,705.2 1551.2,705.4" fill="none" stroke="#3560e0" stroke-width="1.8" stroke-linejoin="round"/><rect x="992" y="478" width="1" height="243" fill="#c9caf0"/><rect x="992" y="719" width="571" height="1" fill="#c9caf0"/><text x="960.0" y="485.0" font-size="10.6" fill="#d4d6f2" textLength="25.8" lengthAdjust="spacingAndGlyphs" stroke="#d4d6f2" stroke-width="0.45">100%</text><text x="966.0" y="530.2" font-size="10.6" fill="#d4d6f2" textLength="19.8" lengthAdjust="spacingAndGlyphs" stroke="#d4d6f2" stroke-width="0.45">80%</text><text x="966.0" y="578.9" font-size="10.6" fill="#d4d6f2" textLength="19.8" lengthAdjust="spacingAndGlyphs" stroke="#d4d6f2" stroke-width="0.45">60%</text><text x="966.0" y="627.1" font-size="10.6" fill="#d4d6f2" textLength="19.8" lengthAdjust="spacingAndGlyphs" stroke="#d4d6f2" stroke-width="0.45">40%</text><text x="966.0" y="675.7" font-size="10.6" fill="#d4d6f2" textLength="19.8" lengthAdjust="spacingAndGlyphs" stroke="#d4d6f2" stroke-width="0.45">20%</text><text x="971.8" y="721.9" font-size="10.6" fill="#d4d6f2" textLength="14.0" lengthAdjust="spacingAndGlyphs" stroke="#d4d6f2" stroke-width="0.45">0%</text><g transform="translate(952.2 599.4) rotate(-90)"><text x="-30.5" y="0.0" font-size="10.6" fill="#d4d6f2" textLength="61.0" lengthAdjust="spacingAndGlyphs" stroke="#d4d6f2" stroke-width="0.25">CPU usage %</text></g><text x="1048.9" y="733.6" font-size="10.6" fill="#d4d6f2" textLength="45.2" lengthAdjust="spacingAndGlyphs" stroke="#d4d6f2" stroke-width="0.45">11:30 PM</text><text x="1174.3" y="733.6" font-size="10.6" fill="#d4d6f2" textLength="31.3" lengthAdjust="spacingAndGlyphs" stroke="#d4d6f2" stroke-width="0.45">Jan 31</text><text x="1309.2" y="733.6" font-size="10.6" fill="#d4d6f2" textLength="44.8" lengthAdjust="spacingAndGlyphs" stroke="#d4d6f2" stroke-width="0.45">12:30 AM</text><text x="1441.8" y="733.6" font-size="10.6" fill="#d4d6f2" textLength="31.0" lengthAdjust="spacingAndGlyphs" stroke="#d4d6f2" stroke-width="0.45">01 AM</text><path d="M1000 731.7h-6.6m2.9-3l-3 3 3 3" fill="none" stroke="#d4d6f2" stroke-width="1.2" stroke-linecap="round" stroke-linejoin="round"/><path d="M1554.4 731.7h6.6m-2.9-3l3 3-3 3" fill="none" stroke="#d4d6f2" stroke-width="1.2" stroke-linecap="round" stroke-linejoin="round"/><circle cx="1587.4" cy="479.4" r="3.75" fill="#3560e0"/><text x="1600.3" y="483.0" font-size="10.8" fill="#f0f0fa" font-weight="bold" textLength="156.3" lengthAdjust="spacingAndGlyphs">aks-default-18490522-vmss_0</text><circle cx="1587.4" cy="497.4" r="3.75" fill="#e6e6f5"/><text x="1600.3" y="501.0" font-size="10.8" fill="#f0f0fa" font-weight="bold" textLength="156.3" lengthAdjust="spacingAndGlyphs">aks-default-18490522-vmss_2</text><circle cx="1587.4" cy="515.4" r="3.75" fill="#3f8e68"/><text x="1600.3" y="519.0" font-size="10.8" fill="#f0f0fa" font-weight="bold" textLength="153.9" lengthAdjust="spacingAndGlyphs">ip-172-31-23-111.ec2.internal</text><circle cx="1587.4" cy="533.4" r="3.75" fill="#dc5a9b"/><text x="1600.3" y="537.0" font-size="10.8" fill="#f0f0fa" font-weight="bold" textLength="153.9" lengthAdjust="spacingAndGlyphs">ip-172-31-36-104.ec2.internal</text><circle cx="1587.4" cy="551.4" r="3.75" fill="#8c8da0"/><text x="1600.3" y="555.0" font-size="10.8" fill="#f0f0fa" font-weight="bold" textLength="141.3" lengthAdjust="spacingAndGlyphs">ip-172-31-7-20.ec2.internal</text><circle cx="1587.4" cy="569.4" r="3.75" fill="#c8982f"/><text x="1600.3" y="573.0" font-size="10.8" fill="#f0f0fa" font-weight="bold" textLength="153.9" lengthAdjust="spacingAndGlyphs">ip-172-31-74-188.ec2.internal</text><circle cx="1587.4" cy="587.4" r="3.75" fill="#4590b4"/><text x="1600.3" y="591.0" font-size="10.8" fill="#f0f0fa" font-weight="bold" textLength="146.5" lengthAdjust="spacingAndGlyphs">ip-172-31-85-37.ec2.internal</text><circle cx="1587.4" cy="605.4" r="3.75" fill="#9b7ddc"/><text x="1600.3" y="609.0" font-size="10.8" fill="#f0f0fa" font-weight="bold" textLength="217.6" lengthAdjust="spacingAndGlyphs">lnx1-demo.c.dynatrace-demoability.internal</text><rect x="1568" y="588" width="2" height="33" fill="#b9b9e3"/></svg></div>
<div class="edge"></div>
</body></html>
